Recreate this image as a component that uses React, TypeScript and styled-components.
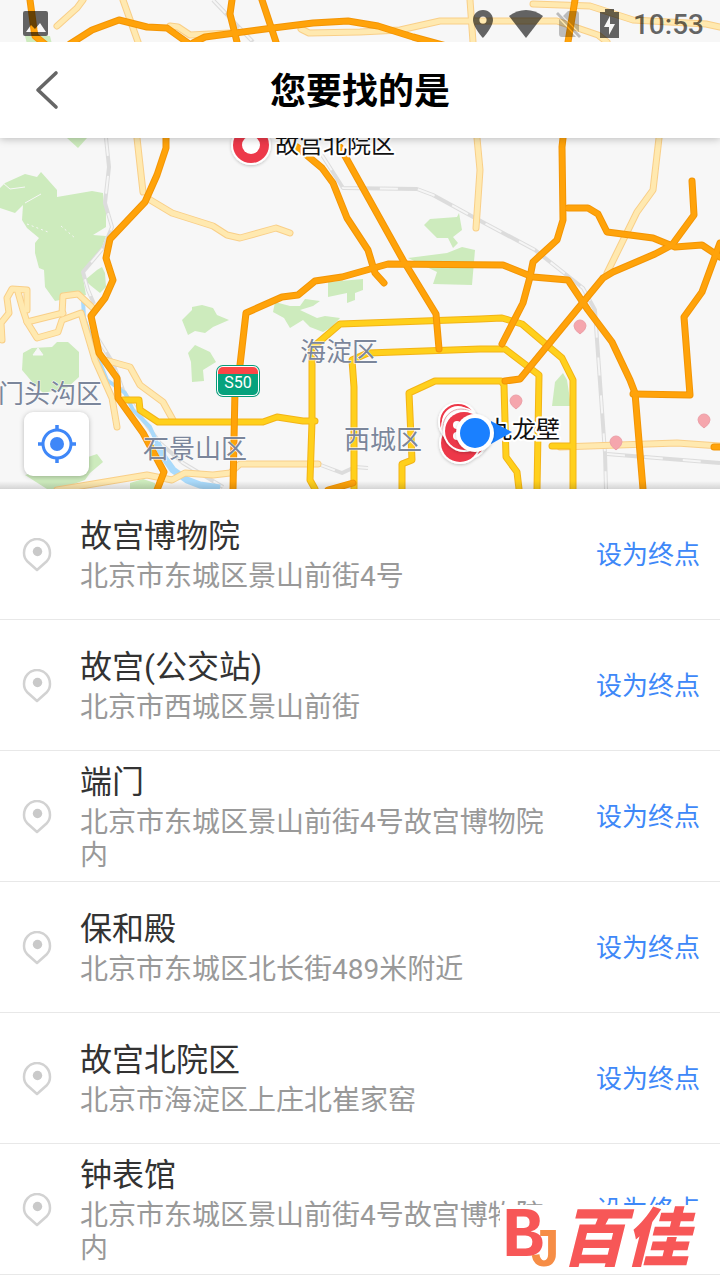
import React from "react";
import styled, { createGlobalStyle } from "styled-components";

const sans = `Roboto, "Noto Sans CJK SC", sans-serif`;

const GlobalStyle = createGlobalStyle`
  *, *::before, *::after { box-sizing: border-box; }
  body { margin: 0; background: #fff; font-family: ${sans}; color: #333; }
  h1, h2, p, ul { margin: 0; padding: 0; }
  button { border: 0; padding: 0; background: none; font: inherit; cursor: pointer; }
`;

const Page = styled.main`
  position: relative;
  width: 100%;
`;

const Hero = styled.section`
  position: relative;
  display: flex;
  flex-direction: column;
  overflow: hidden;
  background: #f7f7f7;
`;

const MapCanvas = styled.svg`
  position: absolute;
  inset: 0;
  width: 100%;
  height: 100%;
`;

const StatusBar = styled.div`
  position: relative;
  display: flex;
  align-items: center;
  justify-content: space-between;
  height: 42px;
  padding: 8px 16px 0 22px;
  color: rgba(0, 0, 0, 0.6);
`;

const StatusIcons = styled.div`
  display: flex;
  align-items: center;
`;

const Clock = styled.time`
  margin-left: 14px;
  font-size: 28px;
  font-weight: 500;
  line-height: 34px;
`;

const Header = styled.header`
  position: relative;
  display: grid;
  grid-template-columns: 96px 1fr 96px;
  align-items: center;
  height: 96px;
  background: #fff;
  box-shadow: 0 1px 8px rgba(0, 0, 0, 0.25);
  clip-path: inset(0 0 -16px 0);
`;

const BackButton = styled.button`
  display: flex;
  align-items: center;
  height: 96px;
  padding-left: 32px;
`;

const Title = styled.h1`
  padding-top: 4px;
  text-align: center;
  font-size: 36px;
  line-height: 48px;
  font-weight: 700;
  color: #000;
`;

const MapControls = styled.div`
  position: relative;
  display: flex;
  align-items: flex-end;
  height: 351px;
  padding: 0 24px 13px;
  background: linear-gradient(to top, rgba(0, 0, 0, 0.14), rgba(0, 0, 0, 0) 8px);
`;

const LocateButton = styled.button`
  display: flex;
  align-items: center;
  justify-content: center;
  width: 65px;
  height: 64px;
  border-radius: 9px;
  background: #fff;
  box-shadow: 0 1px 5px rgba(0, 0, 0, 0.25);
`;

const PlaceList = styled.ul`
  list-style: none;
  background: #fff;
`;

const PlaceRow = styled.li`
  display: flex;
  align-items: center;
  min-height: 131px;
  padding: 1px 20px 0 22px;
  border-bottom: 1px solid #e8e8e8;
`;

const PlaceText = styled.div`
  flex: 1;
  min-width: 0;
  margin: 0 32px 0 28px;
`;

const PlaceName = styled.h2`
  margin-bottom: 4px;
  font-size: 32px;
  line-height: 40px;
  font-weight: 400;
  color: #333;
`;

const PlaceAddress = styled.p`
  font-size: 28px;
  line-height: 33px;
  color: #999;
`;

const SetEndButton = styled.button`
  flex: none;
  font-size: 26px;
  line-height: 36px;
  color: #3e88f8;
`;

const Watermark = styled.div`
  position: absolute;
  right: 16px;
  bottom: 5px;
  width: 204px;
  height: 65px;
  background: #fff;
`;

const MapText = styled.text<{ $place?: boolean }>`
  font-family: ${sans};
  font-size: ${(p) => (p.$place ? 24 : 26)}px;
  fill: ${(p) => (p.$place ? "#111" : "#7b869b")};
  stroke: #fff;
  stroke-width: ${(p) => (p.$place ? 4 : 1)}px;
  stroke-linejoin: round;
  paint-order: stroke;
`;

const BrandText = styled.text`
  font-family: "Noto Sans CJK SC", sans-serif;
  font-size: 64px;
  font-weight: 900;
  font-style: italic;
  fill: #f75757;
`;

const BrandLetter = styled.text<{ $accent?: boolean }>`
  font-family: "Liberation Mono", monospace;
  font-size: ${(p) => (p.$accent ? 54 : 70)}px;
  font-weight: 700;
  fill: ${(p) => (p.$accent ? "#f68d46" : "#f75757")};
`;

const parks = [
  "0,188 5,183 25,174 37,177 41,172 57,190 57,197 92,191 103,193 104,205 106,210 106,227 93,235 106,236 102,247 90,263 82,272 86,295 55,301 45,287 44,270 39,268 35,253 35,243 39,238 27,228 22,220 23,205 15,213 0,208",
  "85,280 97,270 102,267 105,273 106,287 100,293 90,285",
  "67,138 87,138 78,148",
  "25,36 50,36 52,44 27,44",
  "23,353 32,348 52,347 57,342 68,342 79,352 79,377 67,388 43,393 33,383 22,370",
  "25,475 88,457 97,454 103,462 90,473 85,480 60,489 47,489",
  "130,483 143,479 155,483 155,489 130,489",
  "182,320 192,310 192,307 202,305 213,308 217,315 229,320 213,327 205,333 195,331 188,335",
  "188,353 195,345 210,352 216,362 203,370 204,381 192,382 191,362",
  "424,225 430,219 457,217 459,213 462,230 453,237 458,243 453,248 448,238 437,238",
  "408,258 447,253 462,247 475,250 472,285 433,284 437,272",
  "328,282 363,279 363,290 355,293 355,300 347,303 347,293 328,297",
  "273,312 275,302 290,306 300,306 305,299 320,301 313,306 300,310 317,318 325,316 340,318 332,327 323,332 310,327 303,320 290,328 284,318",
  "552,406 555,382 563,373 567,380 571,406",
];

const rails = [
  "213,0 253,42",
  "106,138 109,167 105,203 112,227 104,247 83,272 88,290 94,304",
  "97,337 113,363 123,390 143,420 160,443 183,463 223,487",
  "322,155 343,188 417,189 433,195 475,218 535,250 583,288 595,310 597,340 605,453 606,489",
  "607,454 720,463",
  "318,464 342,473 355,467 368,468",
];

const river = "83,300 84,318 100,363 107,380 125,393 133,410 150,427 157,443 160,450";
const riverWide = "157,443 163,456 173,470 187,480 200,485 220,488";

const minorRoads = [
  "83,0 77,8 57,26",
  "123,0 138,42",
  "170,26 178,27 190,35 230,33",
  "301,29 309,33 360,32 400,30 440,21 557,21 598,35 607,42",
  "470,0 473,42",
  "533,4 590,6 633,20 706,24 720,27",
  "137,138 143,192",
  "147,198 172,213 213,226 227,235 240,238 276,228 290,233",
  "62,314 63,296 78,294 93,308",
  "2,340 1,323 9,313 7,298 12,289 27,290 27,310",
  "18,292 23,310 27,322 63,313",
  "27,322 37,338 58,332 62,320 81,313 95,360 112,398 117,427",
  "105,360 130,367 140,385 163,402 173,420",
  "57,490 147,475 172,480 185,473 213,475 230,473 240,464 318,464",
  "477,138 480,170 476,228",
  "659,138 653,190 637,212 607,273",
  "560,447 677,443 720,446",
];

const ringRoads = [
  "123,400 139,400 140,410 158,422 263,422 277,417 303,421 315,421",
  "315,489 310,480 312,422 312,348 340,324 480,319 502,318 522,324 562,358 573,380 573,489",
  "354,489 354,387 352,360 368,353 480,349 505,349 539,375 537,489",
  "402,489 402,464 412,460 409,393 435,381 501,381 504,385 506,457 517,472 519,489",
  "552,446 570,446",
];

const highways = [
  "30,0 34,30 35,36 46,45",
  "70,44 92,30 119,20 147,27 167,28 188,43",
  "193,43 205,37 273,28 313,23 348,21 378,26 413,37 446,46",
  "232,0 230,14 237,42",
  "262,0 276,42",
  "575,0 568,42",
  "166,138 166,148 157,175 145,202 110,239 106,258 113,280 105,298 91,316 99,353 117,378 118,398 143,433 164,472 157,490",
  "297,147 322,168 333,183 347,218 368,250 375,273 384,283",
  "340,147 403,260 436,314 439,349",
  "233,489 235,390 240,365 246,313 282,297 298,295 315,281 342,277 388,264 503,265 533,277 568,280 588,310 612,342 630,380 635,393 643,489",
  "563,138 562,147 563,220 557,240 533,262 530,277 523,303 502,344",
  "568,208 588,208 598,214 607,232 653,238 675,247 702,245 720,257",
  "692,181 694,215 672,245 655,254 613,272 603,278 520,379 505,381",
  "720,243 702,292 684,317 690,395 633,394",
  "328,490 353,483",
  "714,447 722,447",
];

const districts = [
  { name: "海淀区", x: 300, y: 361 },
  { name: "门头沟区", x: -2, y: 403 },
  { name: "石景山区", x: 143, y: 458 },
  { name: "西城区", x: 344, y: 449 },
];

const pins = [
  [580, 326],
  [516, 401],
  [704, 420],
  [616, 442],
];

const places = [
  { name: "故宫博物院", address: "北京市东城区景山前街4号" },
  { name: "故宫(公交站)", address: "北京市西城区景山前街" },
  { name: "端门", address: "北京市东城区景山前街4号故宫博物院内" },
  { name: "保和殿", address: "北京市东城区北长街489米附近" },
  { name: "故宫北院区", address: "北京市海淀区上庄北崔家窑" },
  { name: "钟表馆", address: "北京市东城区景山前街4号故宫博物院内" },
];

function Roads({ lines, edge, fill, width }: { lines: string[]; edge: string; fill: string; width: number }) {
  return (
    <g fill="none" strokeLinejoin="round" strokeLinecap="round">
      <g stroke={edge} strokeWidth={width}>
        {lines.map((l) => <polyline key={l} points={l} />)}
      </g>
      <g stroke={fill} strokeWidth={width - 2}>
        {lines.map((l) => <polyline key={l} points={l} />)}
      </g>
    </g>
  );
}

function CityMap() {
  return (
    <MapCanvas viewBox="0 0 720 489" preserveAspectRatio="xMidYMid slice" role="img" aria-label="地图">
      <defs>
        <filter id="soft" x="-30%" y="-30%" width="160%" height="160%">
          <feDropShadow dx="0" dy="1" stdDeviation="1.500" floodOpacity="0.22" />
        </filter>
      </defs>
      <g fill="#cdebbd">
        {parks.map((p) => <polygon key={p} points={p} />)}
      </g>
      <g fill="none" stroke="#f7f7f7" strokeWidth="1">
        <path d="M3 183 10 189 25 187M25 203 41 194" />
        <path d="M27 224 48 232M61 226 75 238" strokeDasharray="2 3" />
        <path d="M33 355 38 348 43 355z" fill="#f7f7f7" />
      </g>
      <g fill="none" strokeLinejoin="round">
        {rails.map((r) => (
          <g key={r}>
            <polyline points={r} stroke="#dcdcdc" strokeWidth="4" />
            <polyline points={r} stroke="#f5f5f5" strokeWidth="2" strokeDasharray="18 20" />
          </g>
        ))}
      </g>
      <polyline points={river} fill="none" stroke="#a9dafb" strokeWidth="4" strokeLinejoin="round" />
      <polyline points={riverWide} fill="none" stroke="#a9dafb" strokeWidth="7" strokeLinejoin="round" />
      <Roads lines={minorRoads} edge="#f9cf88" fill="#ffe9b0" width={7} />
      <Roads lines={ringRoads} edge="#f3b416" fill="#ffd01c" width={7} />
      <Roads lines={highways} edge="#f39505" fill="#ffa30a" width={7} />

      {districts.map((d) => (
        <MapText key={d.name} x={d.x} y={d.y}>{d.name}</MapText>
      ))}

      <g>
        <rect x="216" y="365" width="44" height="32" rx="7" fill="#079b7a" />
        <rect x="217" y="366" width="42" height="30" rx="6" fill="#fff" />
        <path d="M218 374v-2a5 5 0 0 1 5-5h30a5 5 0 0 1 5 5v2z" fill="#fb4546" />
        <path d="M218 374h40v16a5 5 0 0 1-5 5h-30a5 5 0 0 1-5-5z" fill="#06a27d" />
        <text x="238" y="388" fontSize="16" textAnchor="middle" fill="#fff" fontFamily="Roboto, sans-serif">S50</text>
      </g>

      {pins.map(([x, y]) => (
        <path key={x} d={`M${x - 6} ${y}a6 6 0 1 1 12 0q0 4-6 8q-6-4-6-8z`} fill="#f5a6ad" stroke="#eba0a8" strokeWidth="1" />
      ))}

      <MapText $place x={275} y={153}>故宫北院区</MapText>
      <circle cx="251" cy="145" r="20" fill="#fff" filter="url(#soft)" />
      <circle cx="251" cy="145" r="18" fill="#ed394a" />
      <circle cx="251" cy="145" r="9" fill="#fff" />

      <MapText $place x={488} y={438}>九龙壁</MapText>
      <g filter="url(#soft)">
        <circle cx="468" cy="439" r="20" fill="#fff" />
        <circle cx="468" cy="439" r="18" fill="#ed394a" />
        <circle cx="460" cy="443" r="21" fill="#fff" />
        <circle cx="460" cy="443" r="19" fill="#ed394a" />
      </g>
      <g filter="url(#soft)">
        <circle cx="458" cy="422" r="20" fill="#fff" />
        <circle cx="458" cy="422" r="17" fill="none" stroke="#ed394a" strokeWidth="2" />
        <circle cx="461" cy="427" r="20" fill="#fff" />
        <circle cx="461" cy="427" r="18" fill="none" stroke="#e9a4ab" strokeWidth="1" />
      </g>
      <circle cx="464" cy="431" r="21" fill="#fff" filter="url(#soft)" />
      <circle cx="464" cy="431" r="19" fill="#ed394a" />
      <circle cx="457" cy="425" r="4" fill="#fff" />
      <circle cx="457" cy="436" r="4" fill="#fff" />
      <path d="M491 421 512 432 491 444z" fill="#1a80ff" />
      <circle cx="475" cy="433" r="19" fill="#fff" filter="url(#soft)" />
      <circle cx="475" cy="433" r="15" fill="#1a80ff" />
    </MapCanvas>
  );
}

function PlaceIcon() {
  return (
    <svg width="30" height="34" viewBox="0 0 30 34" fill="none" aria-hidden="true">
      <path d="M15 32 5.500 23.500C3 21 2 18 2 15 2 7.500 7.500 1 15 1s13 6.500 13 14c0 3-1 6-3.500 8.500z" stroke="#d2d2d2" strokeWidth="2.500" strokeLinejoin="round" />
      <circle cx="15.500" cy="13.500" r="4.700" fill="#c9c9c9" />
    </svg>
  );
}

export default function App() {
  return (
    <Page>
      <GlobalStyle />
      <Hero>
        <CityMap />
        <StatusBar>
          <svg width="28" height="28" viewBox="0 0 28 28" fill="currentColor" aria-hidden="true">
            <path fillRule="evenodd" d="M3 0h21a2 2 0 0 1 2 2v21a2 2 0 0 1-2 2H3a2 2 0 0 1-2-2V2a2 2 0 0 1 2-2zm1 21h20l-6-9-5 6-4-4z" />
          </svg>
          <StatusIcons>
            <svg width="148" height="32" viewBox="471 9 148 32" fill="currentColor" aria-hidden="true">
              <path fillRule="evenodd" d="M483 10c-6 0-10 4.500-10 10 0 7 10 18 10 18s10-11 10-18c0-5.500-4-10-10-10zm0 6.500a3.600 3.600 0 1 1 0 7.200 3.600 3.600 0 0 1 0-7.200z" />
              <path d="M509 16c10-8 24-8 34 0l-17 22z" />
              <g opacity="0.4">
                <path d="M563 16 568 11h8a3 3 0 0 1 3 3v18zM559 19l17 18h-14a3 3 0 0 1-3-3z" />
                <path d="m556 14 2-2 23 24-2 2z" />
              </g>
              <path fillRule="evenodd" d="M605 9h9v3h5v26h-19V12h5zm5 7-6 11h5v8l6-11h-5z" />
            </svg>
            <Clock>10:53</Clock>
          </StatusIcons>
        </StatusBar>
        <Header>
          <BackButton aria-label="返回">
            <svg width="28" height="40" viewBox="0 0 28 40" fill="none" aria-hidden="true">
              <path d="M24 3 6 20l18 17" stroke="#666" strokeWidth="3.600" strokeLinecap="round" strokeLinejoin="round" />
            </svg>
          </BackButton>
          <Title>您要找的是</Title>
        </Header>
        <MapControls>
          <LocateButton aria-label="定位">
            <svg width="38" height="38" viewBox="0 0 38 38" fill="none" stroke="#3f87f8" aria-hidden="true">
              <circle cx="19" cy="19" r="14" strokeWidth="3" />
              <path d="M19 0v6M19 32v6M0 19h6M32 19h6" strokeWidth="3.500" />
              <circle cx="19" cy="19" r="7" fill="#3f87f8" stroke="none" />
            </svg>
          </LocateButton>
        </MapControls>
      </Hero>
      <PlaceList>
        {places.map((p) => (
          <PlaceRow key={p.name}>
            <PlaceIcon />
            <PlaceText>
              <PlaceName>{p.name}</PlaceName>
              <PlaceAddress>{p.address}</PlaceAddress>
            </PlaceText>
            <SetEndButton>设为终点</SetEndButton>
          </PlaceRow>
        ))}
      </PlaceList>
      <Watermark>
        <svg width="204" height="65" viewBox="0 0 204 65" overflow="visible" aria-label="百佳">
          <BrandLetter x="2" y="51">B</BrandLetter>
          <BrandLetter $accent x="29" y="61">J</BrandLetter>
          <BrandText x="61" y="56">百佳</BrandText>
        </svg>
      </Watermark>
    </Page>
  );
}
